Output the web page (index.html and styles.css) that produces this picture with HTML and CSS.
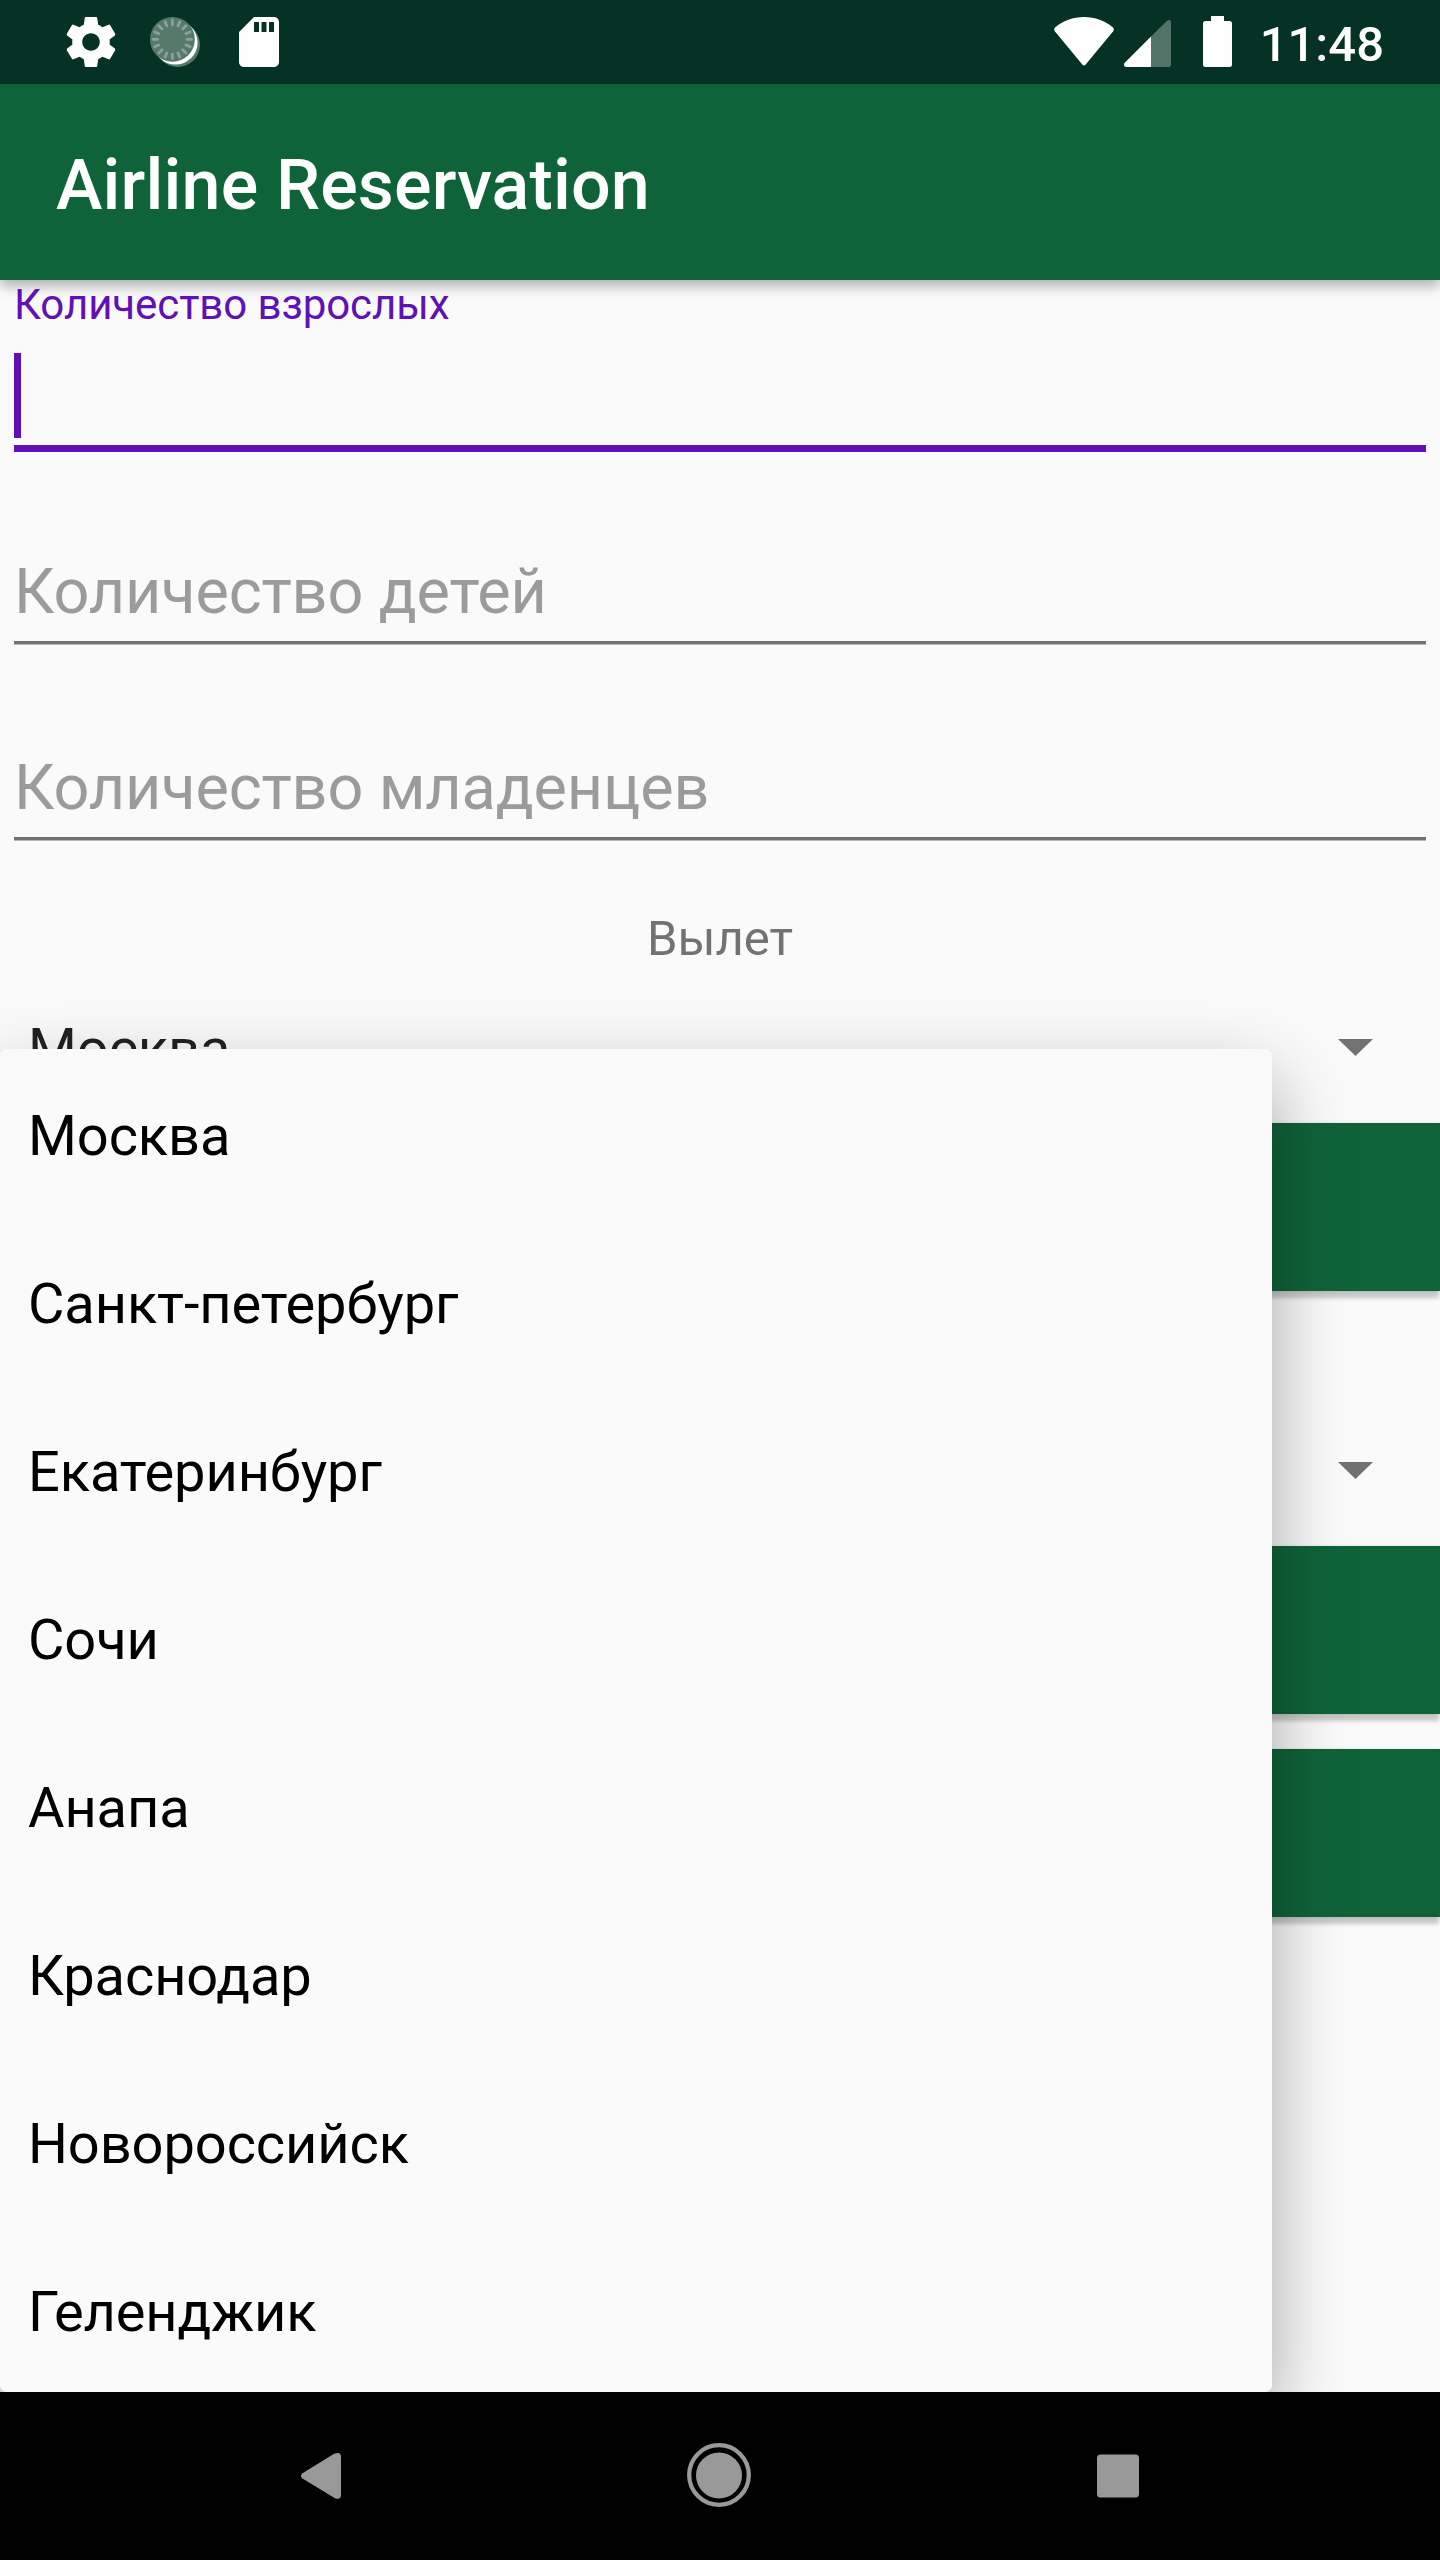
FILE: index.html
```html
<!DOCTYPE html>
<html lang="ru">
<head>
<meta charset="utf-8">
<title>Airline Reservation</title>
<link rel="stylesheet" href="styles.css">
</head>
<body>
<div class="screen">
  <div class="status-bar">
    <div class="status-group">
      <svg width="60" height="60" viewBox="0 0 24 24" fill="#fff"><path d="M19.43 12.98c.04-.32.07-.64.07-.98s-.03-.66-.07-.98l2.11-1.65c.19-.15.24-.42.12-.64l-2-3.46c-.12-.22-.39-.3-.61-.22l-2.49 1c-.52-.4-1.08-.73-1.69-.98l-.38-2.65C14.46 2.18 14.25 2 14 2h-4c-.25 0-.46.18-.49.42l-.38 2.65c-.61.25-1.17.59-1.69.98l-2.49-1c-.23-.09-.49 0-.61.22l-2 3.46c-.13.22-.07.49.12.64l2.11 1.65c-.04.32-.07.65-.07.98s.03.66.07.98l-2.11 1.65c-.19.15-.24.42-.12.64l2 3.46c.12.22.39.3.61.22l2.49-1c.52.4 1.08.73 1.69.98l.38 2.65c.03.24.24.42.49.42h4c.25 0 .46-.18.49-.42l.38-2.65c.61-.25 1.17-.59 1.69-.98l2.49 1c.23.09.49 0 .61-.22l2-3.46c.12-.22.07-.49-.12-.64l-2.11-1.65zM12 15.5c-1.93 0-3.5-1.57-3.5-3.5s1.57-3.5 3.5-3.5 3.5 1.57 3.5 3.5-1.57 3.5-3.5 3.5z"/></svg>
      <svg width="60" height="60" viewBox="0 0 60 60">
        <circle cx="32.6" cy="32.6" r="22.4" fill="#57796c"/>
        <circle cx="30.4" cy="30.4" r="22.2" fill="#fff"/>
        <circle cx="27.4" cy="27.4" r="22.4" fill="#57796c"/>
        <g stroke="#8aa298" stroke-width="2.7" stroke-linecap="round">
          <path id="tick" d="M27.4 8.2v4.6"/>
          <use href="#tick" transform="rotate(22.5 27.4 27.4)"/>
          <use href="#tick" transform="rotate(45 27.4 27.4)"/>
          <use href="#tick" transform="rotate(67.5 27.4 27.4)"/>
          <use href="#tick" transform="rotate(90 27.4 27.4)"/>
          <use href="#tick" transform="rotate(112.5 27.4 27.4)"/>
          <use href="#tick" transform="rotate(135 27.4 27.4)"/>
          <use href="#tick" transform="rotate(157.5 27.4 27.4)"/>
          <use href="#tick" transform="rotate(180 27.4 27.4)"/>
          <use href="#tick" transform="rotate(202.5 27.4 27.4)"/>
          <use href="#tick" transform="rotate(225 27.4 27.4)"/>
          <use href="#tick" transform="rotate(247.5 27.4 27.4)"/>
          <use href="#tick" transform="rotate(270 27.4 27.4)"/>
          <use href="#tick" transform="rotate(292.5 27.4 27.4)"/>
          <use href="#tick" transform="rotate(315 27.4 27.4)"/>
          <use href="#tick" transform="rotate(337.5 27.4 27.4)"/>
        </g>
      </svg>
      <svg width="60" height="60" viewBox="0 0 24 24" fill="#fff"><path d="M18 2h-8L4.02 8 4 20c0 1.1.9 2 2 2h12c1.1 0 2-.9 2-2V4c0-1.100-.9-2-2-2zm-6 6h-2V4h2v4zm3 0h-2V4h2v4zm3 0h-2V4h2v4z"/></svg>
    </div>
    <div class="status-group status-right">
      <svg width="60" height="50" viewBox="0 0 60 50" fill="#fff"><path d="M1 10.500Q-.6 12.500 1 14.500L28.300 47.400Q30 49.400 31.700 47.400L59 14.500Q60.600 12.500 59 10.500C51 3.700 41 0 30 0S9 3.700 1 10.500z"/></svg>
      <svg class="signal" width="47" height="50" viewBox="0 0 47 50"><path d="M27 19.500 43 3.700Q45 2.200 46.500 3.500 47 4.200 47 5V47.500Q47 50 44.500 50H27z" fill="#527368"/><path d="M27 19.500V50H2.500Q0 50 0 47.700 0 46.500 1 45.500z" fill="#fff"/></svg>
      <svg class="battery" width="29" height="51" viewBox="0 0 29 51" fill="#fff"><path d="M8 0h13v5h5.500Q29 5 29 7.500v41Q29 51 26.500 51h-24Q0 51 0 48.500v-41Q0 5 2.500 5H8z"/></svg>
      <span class="clock">11:48</span>
    </div>
  </div>

  <header class="app-bar"><h1 class="app-title">Airline Reservation</h1></header>

  <main class="content">
    <div class="field field-focused">
      <label class="field-label">Количество взрослых</label>
      <div class="cursor"></div>
      <div class="underline-focused"></div>
    </div>
    <div class="field">
      <label class="field-hint">Количество детей</label>
      <div class="underline"></div>
    </div>
    <div class="field">
      <label class="field-hint">Количество младенцев</label>
      <div class="underline"></div>
    </div>

    <div class="route">
      <div class="route-title">Вылет</div>
      <div class="spinner">
        <span class="spinner-value">Москва</span>
        <svg class="arrow" width="35" height="17" viewBox="0 0 35 17"><path d="M0 0h35L17.500 17z" fill="#727272"/></svg>
      </div>
      <div class="button"></div>
    </div>
    <div class="route">
      <div class="route-title"></div>
      <div class="spinner">
        <span class="spinner-value"></span>
        <svg class="arrow" width="35" height="17" viewBox="0 0 35 17"><path d="M0 0h35L17.500 17z" fill="#727272"/></svg>
      </div>
      <div class="button"></div>
    </div>
    <div class="button button-last"></div>

    <ul class="dropdown">
      <li class="option">Москва</li>
      <li class="option">Санкт-петербург</li>
      <li class="option">Екатеринбург</li>
      <li class="option">Сочи</li>
      <li class="option">Анапа</li>
      <li class="option">Краснодар</li>
      <li class="option">Новороссийск</li>
      <li class="option">Геленджик</li>
    </ul>
  </main>

  <nav class="nav-bar">
    <svg width="64" height="64" viewBox="0 0 64 64" fill="#999"><path d="M14.500 30.200 46.500 10.600Q52.500 8.300 53 13.300V52.300Q52.500 57.300 47 55.200L14.500 35.600Q11.300 33 14.500 30.200z"/></svg>
    <svg width="64" height="64" viewBox="0 0 64 64"><circle cx="32" cy="32" r="29.800" fill="none" stroke="#999" stroke-width="4.300"/><circle cx="32" cy="32.400" r="23" fill="#999"/></svg>
    <svg width="64" height="64" viewBox="0 0 64 64"><rect x="11" y="11.500" width="42" height="43" rx="3.500" fill="#999"/></svg>
  </nav>
</div>
</body>
</html>
```
FILE: styles.css
```css
* { box-sizing: border-box; }

body {
  margin: 0;
  background: #fafafa;
  font-family: Roboto, "Noto Sans", sans-serif;
}

.screen {
  display: flex;
  flex-direction: column;
  width: 1440px;
  height: 2560px;
  overflow: hidden;
}

svg { display: block; flex: none; }

.status-bar {
  display: flex;
  justify-content: space-between;
  height: 84px;
  padding: 0 56px 0 61px;
  background: #053224;
}

.status-group {
  display: flex;
  align-items: center;
  gap: 24px;
}

.status-right {
  align-items: flex-start;
  gap: 0;
  padding-top: 17px;
}

.signal { margin-left: 10px; }
.battery { margin: -1px 0 0 32px; }

.clock {
  margin: -1px 0 0 28px;
  color: #fff;
  font-size: 49px;
  font-weight: 500;
  line-height: 58px;
}

.app-bar {
  position: relative;
  z-index: 1;
  display: flex;
  align-items: center;
  flex: none;
  height: 196px;
  padding: 6px 56px 0;
  background: #0f6339;
  box-shadow: 0 6px 12px rgba(0, 0, 0, 0.3);
}

.app-title {
  margin: 0;
  color: #fff;
  font-size: 70px;
  font-weight: 500;
  line-height: 82px;
  letter-spacing: 0.17px;
}

.content {
  position: relative;
  flex: none;
  height: 2112px;
}

.field {
  height: 196px;
  padding: 78px 14px 0;
}

.field-focused {
  position: relative;
  z-index: 2;
  padding-top: 0;
}

.field-label {
  display: block;
  color: #6010b8;
  font-size: 42px;
  line-height: 49px;
  letter-spacing: -0.07px;
}

.cursor {
  width: 7px;
  height: 85px;
  margin-top: 24px;
  background: #6010b8;
}

.underline-focused {
  height: 7px;
  margin-top: 7px;
  background: #6010b8;
}

.field-hint {
  display: block;
  color: #9b9b9b;
  font-size: 63px;
  line-height: 75px;
  letter-spacing: -0.15px;
}

.underline {
  height: 4px;
  margin-top: 12px;
  background: linear-gradient(#727272 3px, #b6b6b6 3px);
}

.route { padding-top: 41px; }

.route-title {
  height: 58px;
  color: #727272;
  font-size: 49px;
  line-height: 60px;
  text-align: center;
}

.spinner {
  display: flex;
  align-items: center;
  justify-content: space-between;
  height: 156px;
  padding: 8px 67px 0 28px;
}

.spinner-value {
  color: #212121;
  font-size: 56px;
  line-height: 66px;
  letter-spacing: -0.1px;
}

.arrow { margin-top: -3px; }

.button {
  height: 168px;
  background: #0f6339;
  box-shadow: 0 8px 4px -1px rgba(0, 0, 0, 0.2), 0 0 3px rgba(0, 0, 0, 0.12);
}

.button-last { margin-top: 35px; }

.dropdown {
  position: absolute;
  top: 769px;
  left: 0;
  width: 1272px;
  height: 1343px;
  margin: 0;
  padding: 0;
  border-radius: 7px;
  background: #fafafa;
  box-shadow: 0 30px 76px rgba(0, 0, 0, 0.34);
  list-style: none;
}

.option {
  height: 168px;
  padding: 6px 28px 0;
  color: #000;
  font-size: 56px;
  line-height: 162px;
  letter-spacing: -0.1px;
}

.nav-bar {
  display: flex;
  position: relative;
  z-index: 1;
  justify-content: center;
  gap: 335px;
  height: 168px;
  padding: 51px 3px 0 0;
  background: #000;
}
```
